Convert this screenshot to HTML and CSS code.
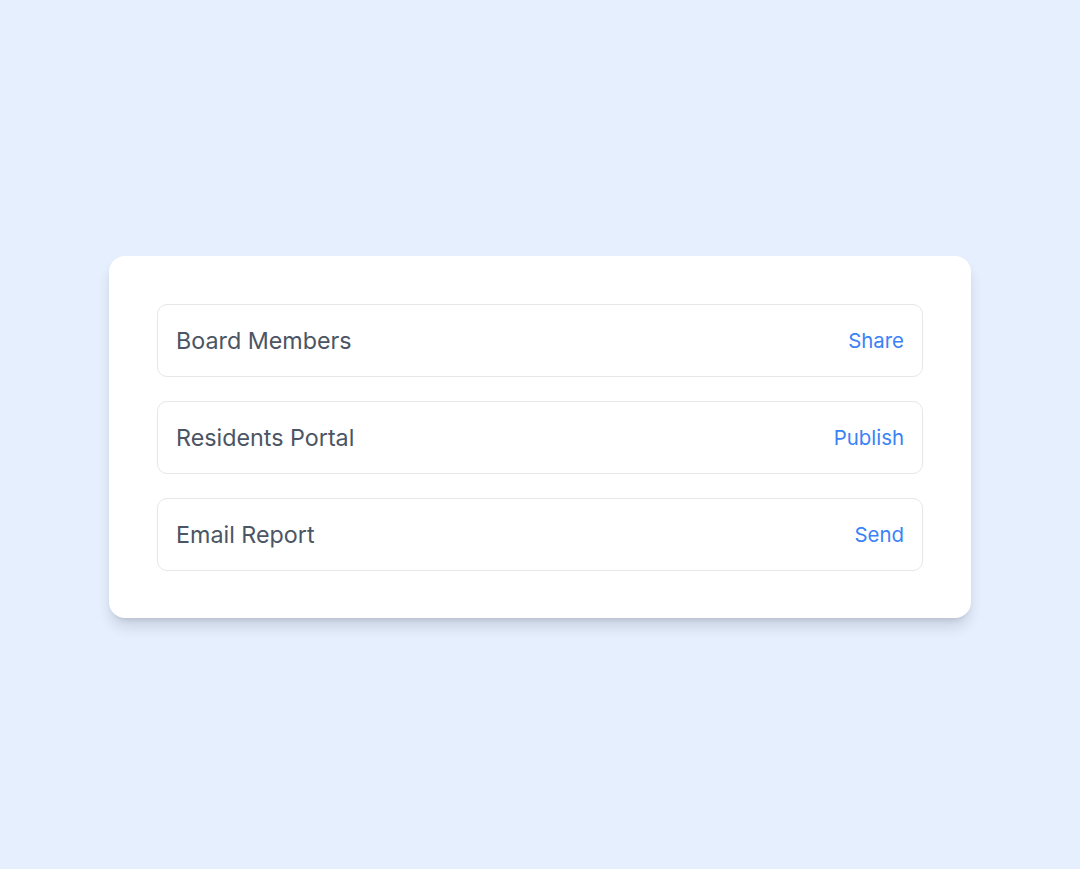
FILE: index.html
```html
<!DOCTYPE html>
<html lang="en">
<head>
<meta charset="utf-8">
<title>Sharing</title>
<link rel="stylesheet" href="styles.css">
</head>
<body>
<main class="page">
  <section class="card">
    <div class="row">
      <span class="label">Board Members</span>
      <a class="action" href="#">Share</a>
    </div>
    <div class="row">
      <span class="label">Residents Portal</span>
      <a class="action" href="#">Publish</a>
    </div>
    <div class="row">
      <span class="label">Email Report</span>
      <a class="action" href="#">Send</a>
    </div>
  </section>
</main>
</body>
</html>
```

FILE: styles.css
```css
* { box-sizing: border-box; }
html, body {
  margin: 0;
  padding: 0;
  height: 100%;
}
body {
  background: #e6effd;
  font-family: Inter, "Noto Sans", sans-serif;
}
.page {
  height: 869px;
  display: flex;
  align-items: center;
  justify-content: center;
  padding-top: 4px;
}
.card {
  width: 862px;
  background: #ffffff;
  border-radius: 16px;
  padding: 48px 48px 47px;
  display: flex;
  flex-direction: column;
  gap: 24px;
  box-shadow: 0 10px 15px -3px rgba(15, 23, 42, 0.16), 0 4px 6px -4px rgba(15, 23, 42, 0.14);
}
.row {
  height: 73px;
  border: 1px solid #e5e7eb;
  border-radius: 10px;
  display: flex;
  align-items: center;
  justify-content: space-between;
  padding: 0 18px;
}
.label {
  font-size: 23.3px;
  color: #4b5563;
}
.action {
  font-size: 20.4px;
  color: #3b82f6;
  text-decoration: none;
}
```
